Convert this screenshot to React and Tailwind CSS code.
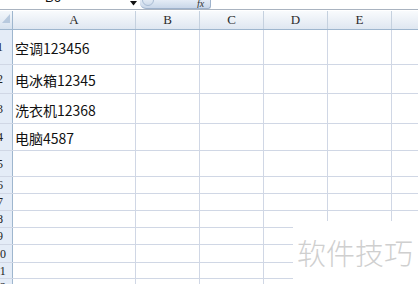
import React from "react";

const cols = [
  { l: "A", w: "w-[123px]" },
  { l: "B", w: "w-[64px]" },
  { l: "C", w: "w-[64px]" },
  { l: "D", w: "w-[64px]" },
  { l: "E", w: "w-[64px]" },
  { l: "F", w: "w-[64px]" },
];

const rows = [
  { n: "1", h: "h-[35px]", t: "空调123456" },
  { n: "2", h: "h-[29px]", t: "电冰箱12345" },
  { n: "3", h: "h-[30px]", t: "洗衣机12368" },
  { n: "4", h: "h-[27px]", t: "电脑4587" },
  { n: "5", h: "h-[26px]" },
  { n: "6", h: "h-[17px]" },
  { n: "7", h: "h-[17px]" },
  { n: "8", h: "h-[17px]" },
  { n: "9", h: "h-[17px]" },
  { n: "10", h: "h-[18px]" },
  { n: "11", h: "h-[16px]" },
  { n: "12", h: "h-[17px]" },
];

export default function App() {
  return (
    <div className="relative w-[418px] h-[284px] overflow-hidden bg-white flex flex-col">
      {/* top formula strip */}
      <div className="h-[10px] flex shrink-0 border-b border-[#a9b3c0]">
        <div className="relative w-[140px] h-full overflow-hidden">
          <span
            className="absolute left-[45px] top-[-9px] text-[13px] leading-[14px] text-[#111]"
            style={{ fontFamily: '"Liberation Sans", Arial, sans-serif' }}
          >
            B6
          </span>
          <svg className="absolute left-[130px] top-[1px]" width="7" height="5" viewBox="0 0 7 5">
            <path d="M0 0 H7 L3.5 4.5 Z" fill="#111" />
          </svg>
        </div>
        <div className="relative w-[71px] h-[9px] rounded-bl-[6px] rounded-br-[3px] bg-gradient-to-b from-[#e4ecf6] to-[#c9d7e9] border-b border-r border-[#9fb3cc] overflow-hidden">
          <div className="absolute left-[2px] top-[-6px] w-[12px] h-[12px] rounded-full bg-gradient-to-b from-[#f5f8fc] to-[#cfdcec] border border-[#a9bcd4]" />
          <span
            className="absolute left-[57px] top-[-4px] text-[10px] italic text-[#333]"
            style={{ fontFamily: '"Liberation Serif", serif' }}
          >
            fx
          </span>
        </div>
        <div className="flex-1" />
      </div>
      {/* column header */}
      <div className="h-[19px] flex shrink-0 border-b border-[#9eb6ce] mt-[1px]">
        <div className="relative w-[13px] shrink-0 h-full border-r border-[#9eb6ce] bg-gradient-to-b from-[#f3f7fb] to-[#d7e2ef]">
          <svg className="absolute left-[1px] top-[2px]" width="10" height="11" viewBox="0 0 10 11">
            <path d="M9 1 V10 H1 Z" fill="#b7c9de" />
          </svg>
        </div>
        {cols.map((c) => (
          <div
            key={c.l}
            className={`${c.w} shrink-0 h-full border-r border-[#c5d1df] bg-gradient-to-b from-[#f9fbfd] to-[#dfe7f1] text-center leading-[18px] text-[13px] text-[#2b2b2b]`}
            style={{ fontFamily: '"Liberation Serif", serif' }}
          >
            {c.l}
          </div>
        ))}
      </div>
      {/* rows */}
      {rows.map((r) => (
        <div key={r.n} className={`${r.h} flex shrink-0 border-b border-[#d0d7e5]`}>
          <div className="w-[13px] h-full shrink-0 overflow-hidden border-r border-[#9eb6ce] bg-[#e4ecf7] relative">
            <div
              className="absolute left-[-13px] w-[26px] h-full flex items-center justify-center text-[12px] text-[#222]"
              style={{ fontFamily: '"Liberation Serif", serif' }}
            >
              {r.n}
            </div>
          </div>
          {cols.map((c, i) => (
            <div
              key={c.l}
              className={`${c.w} shrink-0 h-full border-r border-[#d0d7e5] ${i === 0 ? "flex items-center pl-[2px] pt-[2px]" : ""}`}
            >
              {i === 0 && r.t ? (
                <span
                  className="text-[14px] leading-none text-[#111] whitespace-nowrap"
                  style={{ fontFamily: '"Noto Sans CJK SC", "Noto Sans", sans-serif' }}
                >
                  {r.t}
                </span>
              ) : null}
            </div>
          ))}
        </div>
      ))}
      {/* watermark */}
      <div className="absolute left-[293px] top-[221px] right-0 bottom-0 bg-white flex items-start pt-[17px] pl-[4px]">
        <span
          className="text-[29px] leading-none text-[#cfcfcf] whitespace-nowrap"
          style={{ fontFamily: '"Noto Sans CJK SC", sans-serif', fontWeight: 300 }}
        >
          软件技巧
        </span>
      </div>
    </div>
  );
}
